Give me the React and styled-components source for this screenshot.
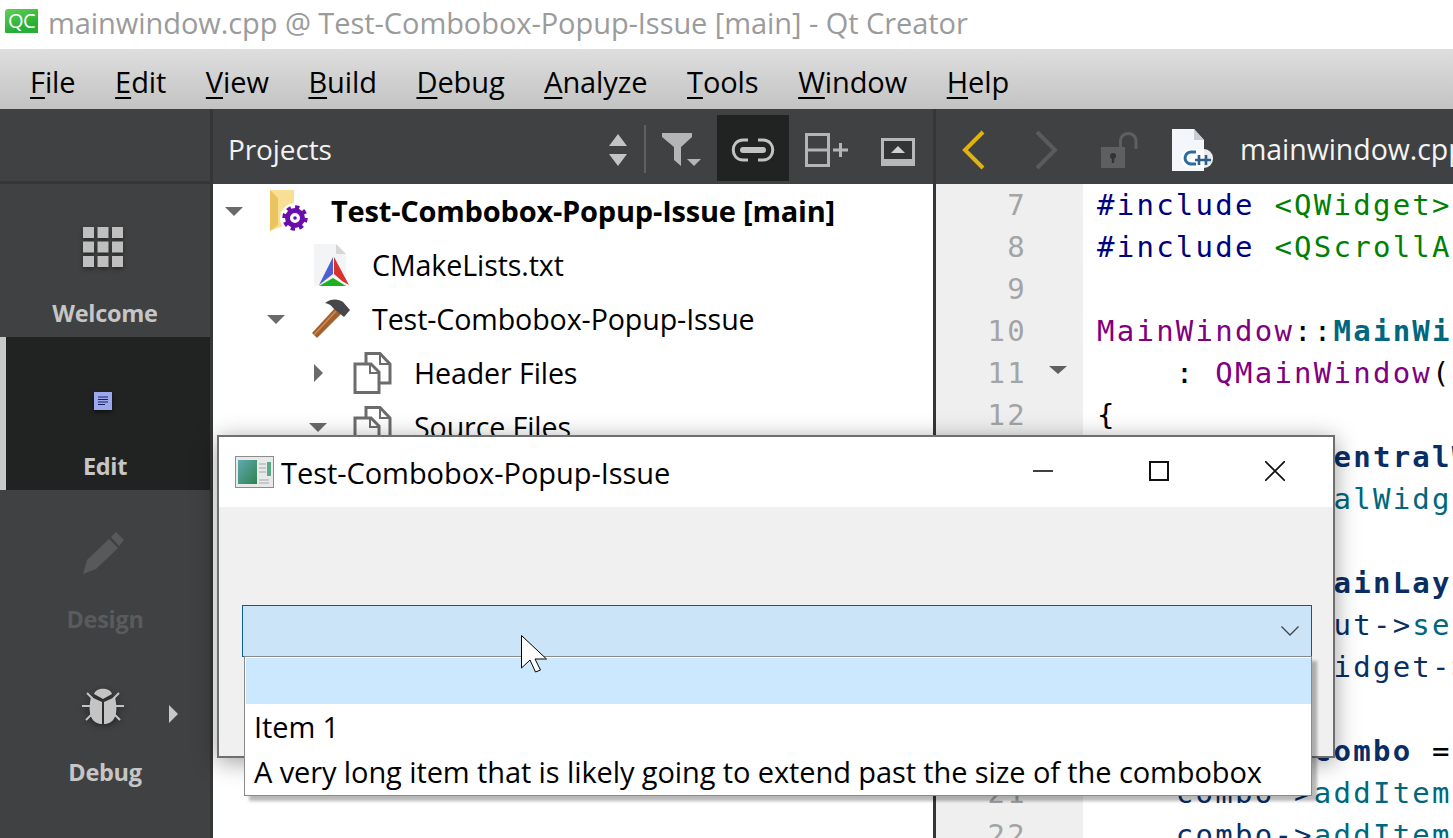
import React from 'react';
import styled, { createGlobalStyle } from 'styled-components';

const Global = createGlobalStyle`
  html, body { margin: 0; padding: 0; background: #fff; overflow: hidden; }
  * { box-sizing: border-box; }
`;
const UI = `"Open Sans", "Liberation Sans", sans-serif`;
const MONO = `"DejaVu Sans Mono", "Liberation Mono", monospace`;

const Root = styled.div`
  position: relative; width: 1453px; height: 838px; overflow: hidden;
  display: flex; flex-direction: column; font-family: ${UI}; background: #fff;
`;
const TitleBar = styled.div`
  height: 49px; flex: none; display: flex; align-items: center; padding-left: 5px; gap: 10px; background: #fff;
`;
const Logo = styled.div`
  width: 33px; height: 24px; margin-top: -7px; border-radius: 3px 1px 0 1px;
  background: linear-gradient(160deg, #63cf55, #27ae36 70%); color: #fff; font-size: 20px; line-height: 24px;
  text-align: center; letter-spacing: -0.5px;
`;
const AppTitle = styled.div`
  font-size: 29px; color: #9b9b9b; white-space: nowrap; letter-spacing: -0.06px; margin-top: -5px;
`;
const MenuBar = styled.div`
  height: 60px; flex: none; display: flex; align-items: center; padding: 6px 0 0 30px; gap: 39.6px;
  background: linear-gradient(#dedede, #c3c3c3);
`;
const MenuItem = styled.div`
  font-size: 29px; color: #000; letter-spacing: -0.1px; line-height: 40px;
  u { text-underline-offset: 4px; text-decoration-thickness: 1.5px; }
`;
const Main = styled.div`
  flex: 1; min-height: 0; display: flex;
`;
const Sidebar = styled.div`
  width: 213px; flex: none; background: #404142; border-right: 3px solid #353637;
  display: flex; flex-direction: column;
`;
const SideTop = styled.div`
  height: 75px; flex: none; border-bottom: 3px solid #353637;
`;
const Mode = styled.div`
  position: relative; height: 153px; flex: none; display: flex; flex-direction: column; align-items: center;
  padding-top: 33px; background: ${p => (p.$active ? '#212323' : 'transparent')};
  border-left: ${p => (p.$active ? '6px solid #c8c8c8' : 'none')};
  padding-right: ${p => (p.$active ? '6px' : '0')};
`;
const ModeIcon = styled.div`
  width: 60px; height: 60px; display: flex; align-items: center; justify-content: center; margin-right: 5px;
`;
const ModeLabel = styled.div`
  margin-top: 21px; font-size: 23.5px; line-height: 30px; font-weight: 700; letter-spacing: -0.3px;
  color: ${p => (p.$dim ? '#5a5b5c' : '#c6c6c6')};
`;
const ModeArrow = styled.div`
  position: absolute; left: 169px; top: 62px; width: 0; height: 0;
  border-left: 9px solid #c8c8c8; border-top: 9px solid transparent; border-bottom: 9px solid transparent;
`;
const ProjectsPane = styled.div`
  width: 720px; flex: none; display: flex; flex-direction: column; background: #fff;
`;
const PaneHeader = styled.div`
  height: 75px; flex: none; background: #404142; display: flex; align-items: center; color: #fff;
`;
const PaneTitle = styled.div`
  flex: 1; padding-left: 15px; font-size: 28px; letter-spacing: -0.1px; color: #f2f2f2; margin-top: 4px;
`;
const ToolButton = styled.div`
  width: ${p => p.$w}px; height: 66px; margin-top: 3px; padding-top: 3px; flex: none; display: flex; align-items: center; justify-content: center;
  background: ${p => (p.$active ? '#212323' : 'transparent')};
`;
const ToolSep = styled.div`
  width: 2px; height: 48px; margin: 4px 2px 0 0; background: #5f6061; flex: none;
`;
const TreeRow = styled.div`
  height: 54px; flex: none; display: flex; align-items: center; padding-left: ${p => 9 + p.$depth * 42}px;
`;
const ArrowSlot = styled.div`
  width: 24px; flex: none; display: flex; justify-content: center;
`;
const Down = styled.div`
  width: 0; height: 0; border-left: 9px solid transparent; border-right: 9px solid transparent; border-top: 9px solid #6a6a6a;
`;
const Right = styled.div`
  width: 0; height: 0; border-top: 9px solid transparent; border-bottom: 9px solid transparent; border-left: 9px solid #6a6a6a;
`;
const IconSlot = styled.div`
  width: 85px; flex: none; display: flex; justify-content: center; align-items: center;
`;
const TreeText = styled.div`
  font-size: ${p => (p.$bold ? '29px' : '28.6px')}; letter-spacing: ${p => (p.$bold ? '-0.2px' : '-0.1px')}; white-space: nowrap;
  font-weight: ${p => (p.$bold ? 700 : 400)}; color: #000; margin: -2px 0 0 ${p => (p.$bold ? '0' : '-1px')};
`;
const EditorPane = styled.div`
  flex: 1; min-width: 0; display: flex; flex-direction: column; border-left: 3px solid #353637; overflow: hidden;
`;
const EditorHeader = styled.div`
  height: 75px; flex: none; background: #404142; display: flex; align-items: center; padding: 6px 0 0 25px; white-space: nowrap;
  svg { flex: none; }
`;
const FileName = styled.div`
  flex: none; font-size: 28.5px; letter-spacing: -0.05px; color: #f4f4f4; margin: -2px 0 0 26px;
`;
const Spacer = styled.div`
  width: ${p => p.$w}px; flex: none;
`;
const CodeRow = styled.div`
  height: 42px; flex: none; display: flex; font-family: ${MONO}; font-size: 29px; line-height: 43px; white-space: pre;
`;
const LineNo = styled.div`
  width: 91px; flex: none; background: #efefef; color: #a4a4a4; text-align: right; letter-spacing: 2.25px;
`;
const FoldSlot = styled.div`
  width: 56px; flex: none; background: #efefef; padding: 14px 0 0 22px;
`;
const Fold = styled.div`
  width: 0; height: 0; border-left: 9px solid transparent; border-right: 9px solid transparent; border-top: 8px solid #606060;
`;
const Code = styled.div`
  padding-left: 14px; letter-spacing: 2.25px; color: #000;
`;
const Tok = styled.span`
  color: ${p => p.$c || '#000'}; font-weight: ${p => (p.$b ? 700 : 400)};
`;
const Win = styled.div`
  position: absolute; left: 217px; top: 435px; width: 1118px; height: 323px; background: #f0f0f0;
  border: 2px solid #6f6f6f; box-shadow: 0 4px 22px rgba(0,0,0,.38); display: flex; flex-direction: column;
`;
const WinTitle = styled.div`
  height: 70px; flex: none; background: #fff; display: flex; align-items: center; padding-left: 16px;
`;
const WinText = styled.div`
  flex: 1; margin-left: 7px; font-size: 29px; letter-spacing: -0.05px; color: #000;
`;
const WinBtn = styled.div`
  width: 116px; height: 70px; display: flex; align-items: center; justify-content: center; flex: none; margin-top: -2px;
`;
const WinBody = styled.div`
  flex: 1; padding: 98px 21px 0 23px;
`;
const Combo = styled.div`
  height: 52px; background: #cce4f7; border: 1.5px solid #0b5a9e; display: flex; align-items: center; justify-content: flex-end; padding-right: 12px;
`;
const Popup = styled.div`
  position: absolute; left: 244px; top: 656px; width: 1068px; height: 140px; background: #fff;
  border: 1.5px solid #8a8a8a; padding: 1px 0 0 1px; box-shadow: 5px 5px 3px rgba(0,0,0,.28);
`;
const PopItem = styled.div`
  height: ${p => p.$h}px; padding: 0 0 1px 8px; font-size: 29px; letter-spacing: -0.1px; color: #000; white-space: nowrap;
  display: flex; align-items: center; background: ${p => (p.$sel ? '#cce8ff' : 'transparent')};
`;
const Cursor = styled.svg`
  position: absolute; left: 521px; top: 635px;
`;

const GridIcon = () => (
  <svg width="42" height="42" viewBox="0 0 42 42" fill="#bfbfbf" style={{ filter: 'drop-shadow(0 2px 2px rgba(0,0,0,.4))' }}>
    {[0, 14.5, 29].flatMap(y => [0, 14.5, 29].map(x => <rect key={`${x}-${y}`} x={x + 1} y={y + 1} width="11" height="11" />))}
  </svg>
);
const EditIcon = () => (
  <svg width="18" height="18" viewBox="0 0 18 18" style={{ filter: 'drop-shadow(0 2px 2px rgba(0,0,0,.6))', marginTop: 2 }}>
    <rect width="18" height="18" fill="#9ba8ee" />
    <path d="M4 5h10M4 7.5h10M4 10h10M4 12.5h7" stroke="#1a1f55" strokeWidth="1" />
  </svg>
);
const PencilIcon = () => (
  <svg width="42" height="42" viewBox="0 0 42 42" fill="#58595a">
    <path d="M1 42 L5 28 L27 7 L36 16 L14 37 Z" />
    <path d="M29 5 L34 0 L42 8 L37 14 Z" />
  </svg>
);
const BugIcon = () => (
  <svg width="42" height="42" viewBox="0 0 42 42" style={{ filter: 'drop-shadow(0 2px 3px rgba(0,0,0,.45))' }}>
    <path d="M5 8 L11 14 M0 21 H8 M4 35 L10 29 M37 8 L31 14 M42 21 H34 M38 35 L32 29" stroke="#c4c4c4" strokeWidth="2" />
    <path d="M12 9 C14 2 28 2 30 9 L21 14 Z" fill="#c4c4c4" />
    <path d="M9 12 L20 17 V39 C10 39 5 30 9 12 Z" fill="#c4c4c4" />
    <path d="M33 12 L22 17 V39 C32 39 37 30 33 12 Z" fill="#c4c4c4" />
  </svg>
);
const SortIcon = () => (
  <svg width="20" height="32" viewBox="0 0 20 32" fill="#c4c4c4"><path d="M10 0 L19 12 H1 Z M1 20 H19 L10 32 Z" /></svg>
);
const FilterIcon = () => (
  <svg width="40" height="33" viewBox="0 0 40 33" fill="#b5b5b5" style={{ marginRight: 2 }}>
    <path d="M0 0 H30 V4 L19 14 V33 L12 27 V14 L0 4 Z" />
    <path d="M25 26 H39 L32 33 Z" />
  </svg>
);
const LinkIcon = () => (
  <svg width="44" height="24" viewBox="0 0 44 24" fill="none" stroke="#c2c2c2" style={{ marginRight: 1 }}>
    <path d="M17 2 H12 C-1 2 -1 22 12 22 H17 M27 2 H32 C45 2 45 22 32 22 H27" strokeWidth="3" />
    <path d="M12 12 H32" strokeWidth="6" strokeLinecap="round" />
  </svg>
);
const SplitIcon = () => (
  <svg width="43" height="34" viewBox="0 0 43 34" fill="none" stroke="#b5b5b5" strokeWidth="3" style={{ marginRight: 2 }}>
    <rect x="1.5" y="1.5" width="22" height="31" />
    <path d="M1.5 17 H23.5" />
    <path d="M28 17 H43 M35.5 10 V24" />
  </svg>
);
const HideIcon = () => (
  <svg width="34" height="28" viewBox="0 0 34 28" style={{ margin: '5px 2px 0 0' }}>
    <rect width="34" height="28" fill="#b8b8b8" />
    <rect x="3" y="3" width="28" height="18" fill="#333435" />
    <path d="M17 8 L24 15 H10 Z" fill="#d0d0d0" />
  </svg>
);
const BackIcon = () => (
  <svg width="24" height="40" viewBox="0 0 24 40" fill="none" stroke="#e2b30e" strokeWidth="4"><path d="M22 2 L4 20 L22 38" /></svg>
);
const FwdIcon = () => (
  <svg width="24" height="40" viewBox="0 0 24 40" fill="none" stroke="#5a5b5c" strokeWidth="4"><path d="M2 2 L20 20 L2 38" /></svg>
);
const LockIcon = () => (
  <svg width="37" height="36" viewBox="0 0 37 36">
    <rect x="0" y="15" width="24" height="21" fill="#5e5f60" />
    <circle cx="12" cy="24" r="3" fill="#333435" />
    <rect x="10.8" y="25" width="2.4" height="6" fill="#333435" />
    <path d="M19.5 15 V9 C19.5 -1 35 -1 35 9 V17" fill="none" stroke="#5e5f60" strokeWidth="3" />
  </svg>
);
const CppFileIcon = () => (
  <svg width="42" height="42" viewBox="0 0 42 42">
    <path d="M0 0 H22 L32 11 V42 H0 Z" fill="#f3f6fa" />
    <path d="M22 0 L32 11 H22 Z" fill="#c9ced4" />
    <rect x="9" y="20" width="32" height="19" rx="9" fill="#fff" opacity=".9" />
    <path d="M24 23 H20 C12 22 10 34 19 35 H24" fill="none" stroke="#2c6aa0" strokeWidth="3" />
    <path d="M23 31 H39 M27 26 V36 M34 26 V36" stroke="#2c5f90" strokeWidth="2.6" />
  </svg>
);
const FolderGear = () => (
  <svg width="42" height="44" viewBox="0 0 42 44">
    <path d="M2 1 L26 1 V33 L2 42 Z" fill="#f8df94" />
    <path d="M2 1 L10 9 V36 L2 42 Z" fill="#eac55f" />
    <circle cx="27" cy="29" r="15" fill="#fff" opacity=".92" />
    <circle cx="27" cy="29" r="7.5" fill="none" stroke="#6a0dad" strokeWidth="5" />
    <circle cx="27" cy="29" r="11" fill="none" stroke="#6a0dad" strokeWidth="3.4" strokeDasharray="4.3 4.3" />
    <circle cx="27" cy="29" r="1.8" fill="#6a0dad" />
  </svg>
);
const CMakeIcon = () => (
  <svg width="38" height="42" viewBox="0 0 38 42">
    <path d="M2 0 H24 L34 10 V42 H2 Z" fill="#f2f4f6" />
    <path d="M24 0 L34 10 H24 Z" fill="#d4d6d8" />
    <path d="M21 13 L7 41 L21 30 Z" fill="#4d5fd0" />
    <path d="M22 13 L37 41 L30 37 L22 30 Z" fill="#d7322c" />
    <path d="M7 42 L21 34 L34 42 Z" fill="#1fb01f" />
  </svg>
);
const Hammer = () => (
  <svg width="40" height="40" viewBox="0 0 40 40">
    <path d="M1 34 L24 9 L30 15 L6 39 Z" fill="#a2602f" />
    <path d="M3 36 L25 12" stroke="#d08b55" strokeWidth="1.5" />
    <path d="M14 4 C20 -1 28 0 32 3 L39 11 L33 18 L22 9 C20 6 18 5 14 4 Z" fill="#45474a" />
  </svg>
);
const PagesIcon = () => (
  <svg width="40" height="42" viewBox="0 0 40 42" fill="none" stroke="#6c6c6c" strokeWidth="3">
    <path d="M13 12 V1.5 H27 L37 12 V31 H27" />
    <path d="M27 2 V12 H37" strokeWidth="2" />
    <path d="M2 12 H18 L26 20 V40.5 H2 Z" fill="#fff" />
    <path d="M17 12 V21 H26" strokeWidth="2" />
  </svg>
);
const AppIcon = () => (
  <svg width="39" height="32" viewBox="0 0 39 32">
    <rect x=".5" y=".5" width="38" height="31" fill="#e8eaea" stroke="#8b8d8d" />
    <defs><linearGradient id="ag" x1="0" y1="0" x2="1" y2="1"><stop offset="0" stopColor="#5fa9b0" /><stop offset="1" stopColor="#2f8350" /></linearGradient></defs>
    <rect x="3" y="4" width="19" height="24" fill="url(#ag)" />
    <path d="M24 8h7M24 12h7M24 16h7M24 24h10M24 27h10" stroke="#a3a7a7" strokeWidth="1" />
    <rect x="32" y="6" width="4" height="14" fill="#5aa88a" />
  </svg>
);

const MENU = [['F', 'ile'], ['E', 'dit'], ['V', 'iew'], ['B', 'uild'], ['D', 'ebug'], ['A', 'nalyze'], ['T', 'ools'], ['W', 'indow'], ['H', 'elp']];
const NAVY = '#000080', GREEN = '#008000', PURPLE = '#800080', TEAL = '#00677c', BNAVY = '#092e64';

const LINES = [
  [7, [['#include', NAVY], [' '], ['<QWidget>', GREEN]]],
  [8, [['#include', NAVY], [' '], ['<QScrollArea>', GREEN]]],
  [9, []],
  [10, [['MainWindow', PURPLE], ['::'], ['MainWindow', '#00677c', 1], ['(QWidget *parent)']]],
  [11, [['    : '], ['QMainWindow', PURPLE], ['(parent)']], true],
  [12, [['{']]],
  [13, [['    auto * '], ['centralWidget', BNAVY, 1], [' = '], ['new', '#808000']]],
  [14, [['    '], ['setCentralWidget', TEAL], ['(centralWidget);']]],
  [15, []],
  [16, [['    auto * '], ['mainLayout', BNAVY, 1], [' = '], ['new', '#808000']]],
  [17, [['    mainLayout->', BNAVY], ['setContentsMargins', TEAL]]],
  [18, [['    centralWidget->', BNAVY], ['setLayout', TEAL]]],
  [19, []],
  [20, [['    auto * '], ['combo', BNAVY, 1], [' = '], ['new', '#808000']]],
  [21, [['    combo->', BNAVY], ['addItem', TEAL], ['("")']]],
  [22, [['    combo->', BNAVY], ['addItem', TEAL], ['("Item 1")']]],
];

const TREE = [
  { d: 0, a: 'down', icon: <FolderGear />, t: 'Test-Combobox-Popup-Issue [main]', b: true },
  { d: 1, icon: <CMakeIcon />, t: 'CMakeLists.txt' },
  { d: 1, a: 'down', icon: <Hammer />, t: 'Test-Combobox-Popup-Issue' },
  { d: 2, a: 'right', icon: <PagesIcon />, t: 'Header Files' },
  { d: 2, a: 'down', icon: <PagesIcon />, t: 'Source Files' },
];

export default function App() {
  return (
    <Root>
      <Global />
      <TitleBar>
        <Logo>QC</Logo>
        <AppTitle>mainwindow.cpp @ Test-Combobox-Popup-Issue [main] - Qt Creator</AppTitle>
      </TitleBar>
      <MenuBar>
        {MENU.map(([a, b]) => <MenuItem key={a}><u>{a}</u>{b}</MenuItem>)}
      </MenuBar>
      <Main>
        <Sidebar>
          <SideTop />
          <Mode><ModeIcon><GridIcon /></ModeIcon><ModeLabel>Welcome</ModeLabel></Mode>
          <Mode $active><ModeIcon><EditIcon /></ModeIcon><ModeLabel>Edit</ModeLabel></Mode>
          <Mode><ModeIcon><PencilIcon /></ModeIcon><ModeLabel $dim>Design</ModeLabel></Mode>
          <Mode><ModeIcon><BugIcon /></ModeIcon><ModeLabel>Debug</ModeLabel><ModeArrow /></Mode>
        </Sidebar>
        <ProjectsPane>
          <PaneHeader>
            <PaneTitle>Projects</PaneTitle>
            <ToolButton $w={52}><SortIcon /></ToolButton>
            <ToolSep />
            <ToolButton $w={69}><FilterIcon /></ToolButton>
            <ToolButton $w={72} $active><LinkIcon /></ToolButton>
            <ToolButton $w={76}><SplitIcon /></ToolButton>
            <ToolButton $w={68}><HideIcon /></ToolButton>
          </PaneHeader>
          {TREE.map(r => (
            <TreeRow key={r.t + r.d} $depth={r.d}>
              <ArrowSlot>{r.a === 'down' && <Down />}{r.a === 'right' && <Right />}</ArrowSlot>
              <IconSlot>{r.icon}</IconSlot>
              <TreeText $bold={r.b}>{r.t}</TreeText>
            </TreeRow>
          ))}
        </ProjectsPane>
        <EditorPane>
          <EditorHeader>
            <BackIcon />
            <Spacer $w={50} />
            <FwdIcon />
            <Spacer $w={42} />
            <LockIcon />
            <Spacer $w={34} />
            <CppFileIcon />
            <FileName>mainwindow.cpp</FileName>
          </EditorHeader>
          {LINES.map(([n, toks, fold]) => (
            <CodeRow key={n}>
              <LineNo>{n}</LineNo>
              <FoldSlot>{fold && <Fold />}</FoldSlot>
              <Code>{toks.map(([s, c, b], i) => <Tok key={i} $c={c} $b={b}>{s}</Tok>)}</Code>
            </CodeRow>
          ))}
        </EditorPane>
      </Main>
      <Win>
        <WinTitle>
          <AppIcon />
          <WinText>Test-Combobox-Popup-Issue</WinText>
          <WinBtn><svg width="20" height="20" viewBox="0 0 20 20"><path d="M0 10 H20" stroke="#111" strokeWidth="1.6" /></svg></WinBtn>
          <WinBtn><svg width="20" height="20" viewBox="0 0 20 20"><rect x="1" y="1" width="18" height="18" fill="none" stroke="#111" strokeWidth="2" /></svg></WinBtn>
          <WinBtn><svg width="20" height="20" viewBox="0 0 20 20"><path d="M0 0 L20 20 M20 0 L0 20" stroke="#111" strokeWidth="1.6" /></svg></WinBtn>
        </WinTitle>
        <WinBody>
          <Combo>
            <svg width="18" height="10" viewBox="0 0 18 10" fill="none" stroke="#444" strokeWidth="1.3"><path d="M.5 .5 L9 9 L17.5 .5" /></svg>
          </Combo>
        </WinBody>
      </Win>
      <Popup>
        <PopItem $sel $h={46} />
        <PopItem $h={46}>Item 1</PopItem>
        <PopItem $h={44}>A very long item that is likely going to extend past the size of the combobox</PopItem>
      </Popup>
      <Cursor width="27" height="39" viewBox="0 0 27 39">
        <path d="M.5 .5 V33 L9 25 L14.5 37 L19.5 35 L14 24 H25.5 Z" fill="#fff" stroke="#000" strokeWidth="1" />
      </Cursor>
    </Root>
  );
}
